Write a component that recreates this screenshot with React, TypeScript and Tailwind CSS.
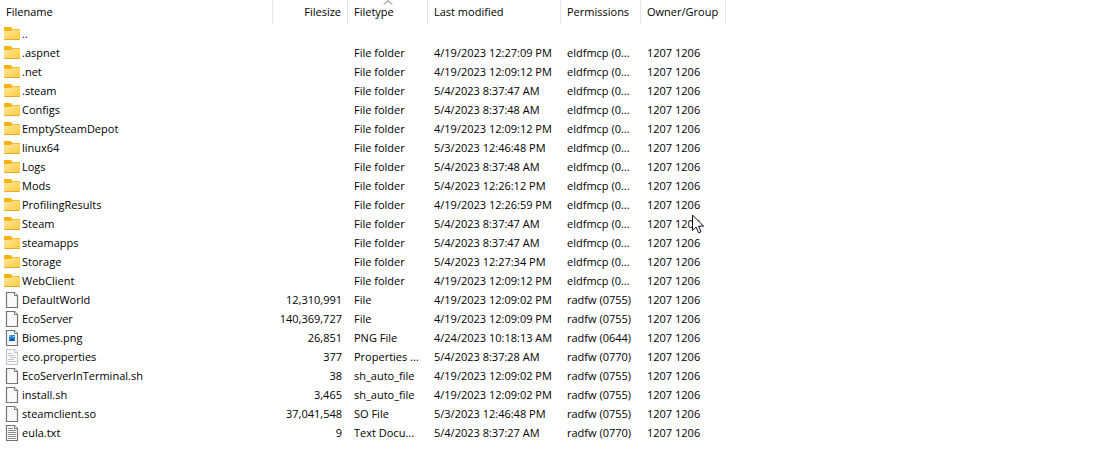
import React from "react";

type Kind = "folder" | "blank" | "image" | "config" | "text";
type Entry = {
  kind: Kind;
  name: string;
  size: string;
  type: string;
  modified: string;
  permissions: string;
  owner: string;
};

const folder = (name: string, modified: string): Entry => ({
  kind: "folder",
  name,
  size: "",
  type: "File folder",
  modified,
  permissions: "eldfmcp (0...",
  owner: "1207 1206",
});

const file = (
  kind: Kind,
  name: string,
  size: string,
  type: string,
  modified: string,
  permissions: string,
): Entry => ({ kind, name, size, type, modified, permissions, owner: "1207 1206" });

const entries: Entry[] = [
  { kind: "folder", name: "..", size: "", type: "", modified: "", permissions: "", owner: "" },
  folder(".aspnet", "4/19/2023 12:27:09 PM"),
  folder(".net", "4/19/2023 12:09:12 PM"),
  folder(".steam", "5/4/2023 8:37:47 AM"),
  folder("Configs", "5/4/2023 8:37:48 AM"),
  folder("EmptySteamDepot", "4/19/2023 12:09:12 PM"),
  folder("linux64", "5/3/2023 12:46:48 PM"),
  folder("Logs", "5/4/2023 8:37:48 AM"),
  folder("Mods", "5/4/2023 12:26:12 PM"),
  folder("ProfilingResults", "4/19/2023 12:26:59 PM"),
  folder("Steam", "5/4/2023 8:37:47 AM"),
  folder("steamapps", "5/4/2023 8:37:47 AM"),
  folder("Storage", "5/4/2023 12:27:34 PM"),
  folder("WebClient", "4/19/2023 12:09:12 PM"),
  file("blank", "DefaultWorld", "12,310,991", "File", "4/19/2023 12:09:02 PM", "radfw (0755)"),
  file("blank", "EcoServer", "140,369,727", "File", "4/19/2023 12:09:09 PM", "radfw (0755)"),
  file("image", "Biomes.png", "26,851", "PNG File", "4/24/2023 10:18:13 AM", "radfw (0644)"),
  file("config", "eco.properties", "377", "Properties ...", "5/4/2023 8:37:28 AM", "radfw (0770)"),
  file("blank", "EcoServerInTerminal.sh", "38", "sh_auto_file", "4/19/2023 12:09:02 PM", "radfw (0755)"),
  file("blank", "install.sh", "3,465", "sh_auto_file", "4/19/2023 12:09:02 PM", "radfw (0755)"),
  file("blank", "steamclient.so", "37,041,548", "SO File", "5/3/2023 12:46:48 PM", "radfw (0755)"),
  file("text", "eula.txt", "9", "Text Docu...", "5/4/2023 8:37:27 AM", "radfw (0770)"),
];

function FolderIcon() {
  return (
    <svg className="size-4 shrink-0" viewBox="0 0 16 16" aria-hidden="true">
      <defs>
        <linearGradient id="folder-front" x1="0" y1="0" x2="1" y2="1">
          <stop offset="0" stopColor="#ffe79f" />
          <stop offset="1" stopColor="#ffca3a" />
        </linearGradient>
      </defs>
      <path d="M0 2q0-1 1-1h5.400q.5 0 .9.500L8.500 3H15q1 0 1 1v3H0z" fill="#f5b30f" />
      <path d="M0 5h6.400q.5 0 .9-.5l.7-.7H15q1 0 1 1V13q0 1-1 1H1q-1 0-1-1z" fill="url(#folder-front)" />
      <path d="M.5 13.500h15" stroke="#e5aa2a" />
    </svg>
  );
}

function FileIcon({ kind }: { kind: Kind }) {
  const edge = kind === "config" ? "#c3c5c6" : "#73736f";
  return (
    <svg className="size-4 shrink-0" viewBox="0 0 16 16" aria-hidden="true">
      <path d="M2.500.5h8l3 3v12h-11z" fill="#fafafa" stroke={edge} strokeWidth="1.200" />
      <path d="M10.500.5v3h3" fill="#ffffff" stroke={edge} />
      {kind === "image" && (
        <>
          <rect x="5" y="5" width="6" height="6" fill="#2583dc" />
          <path d="M5 11l3-3 3 3z" fill="#0b55b0" />
          <path d="M5 5h2v2H5z" fill="#55b5f0" />
          <path d="M9 6h1v1H9z" fill="#ffffff" />
        </>
      )}
      {kind === "config" && (
        <path d="M4 4.500h4M4 6.500h7M6 8.500h6M4 10.500h6M4 12.500h8" stroke="#bfc5ca" />
      )}
      {kind === "text" && (
        <path d="M4 3.500h5M4 5.500h8M4 7.500h8M4 9.500h8M4 11.500h8M4 13.500h8" stroke="#8d8d8d" />
      )}
    </svg>
  );
}

function HeaderCell({
  label,
  right = false,
  sorted = false,
}: {
  label: string;
  right?: boolean;
  sorted?: boolean;
}) {
  return (
    <th
      scope="col"
      aria-sort={sorted ? "ascending" : undefined}
      className="relative h-6 border-r border-[#e5e5e5] p-0 font-normal"
    >
      {sorted && (
        <svg
          className="absolute top-0 left-1/2 h-1.5 w-2.5 -translate-x-1/2"
          viewBox="0 0 10 6"
          fill="none"
          stroke="#6d6d6d"
          aria-hidden="true"
        >
          <path d="M1 4.500l4-4 4 4" />
        </svg>
      )}
      <button type="button" className={`block h-6 w-full px-1.5 pb-0.5 ${right ? "text-right" : "text-left"}`}>
        {label}
      </button>
    </th>
  );
}

export default function App() {
  return (
    <main className="relative min-h-screen bg-white font-['Open_Sans','Noto_Sans',sans-serif] text-[11px] leading-[19px] text-black">
      <table className="w-full table-fixed border-separate border-spacing-0 whitespace-nowrap">
        <colgroup>
          <col className="w-[273px]" />
          <col className="w-[75px]" />
          <col className="w-20" />
          <col className="w-[133px]" />
          <col className="w-20" />
          <col className="w-[85px]" />
          <col />
        </colgroup>
        <thead>
          <tr>
            <HeaderCell label="Filename" />
            <HeaderCell label="Filesize" right />
            <HeaderCell label="Filetype" sorted />
            <HeaderCell label="Last modified" />
            <HeaderCell label="Permissions" />
            <HeaderCell label="Owner/Group" />
            <td />
          </tr>
        </thead>
        <tbody>
          {entries.map((e) => (
            <tr key={e.name}>
              <td className="h-[19px] p-0">
                <div className="flex h-[19px] items-center gap-0.5 pl-1">
                  {e.kind === "folder" ? <FolderIcon /> : <FileIcon kind={e.kind} />}
                  <span>{e.name}</span>
                </div>
              </td>
              <td className="p-0 pr-1.5 text-right">{e.size}</td>
              <td className="p-0 pl-1.5">{e.type}</td>
              <td className="p-0 pl-1.5">{e.modified}</td>
              <td className="p-0 pl-1.5">{e.permissions}</td>
              <td className="p-0 pl-1.5">{e.owner}</td>
              <td />
            </tr>
          ))}
        </tbody>
      </table>
      <svg
        className="pointer-events-none absolute top-[214px] left-[692px] h-5 w-3"
        viewBox="0 0 12 20"
        aria-hidden="true"
      >
        <path
          d="M.5 1v15.500l3.600-3.400 2.500 5.700 2.400-1-2.400-5.600h5z"
          fill="#ffffff"
          stroke="#101020"
        />
      </svg>
    </main>
  );
}
